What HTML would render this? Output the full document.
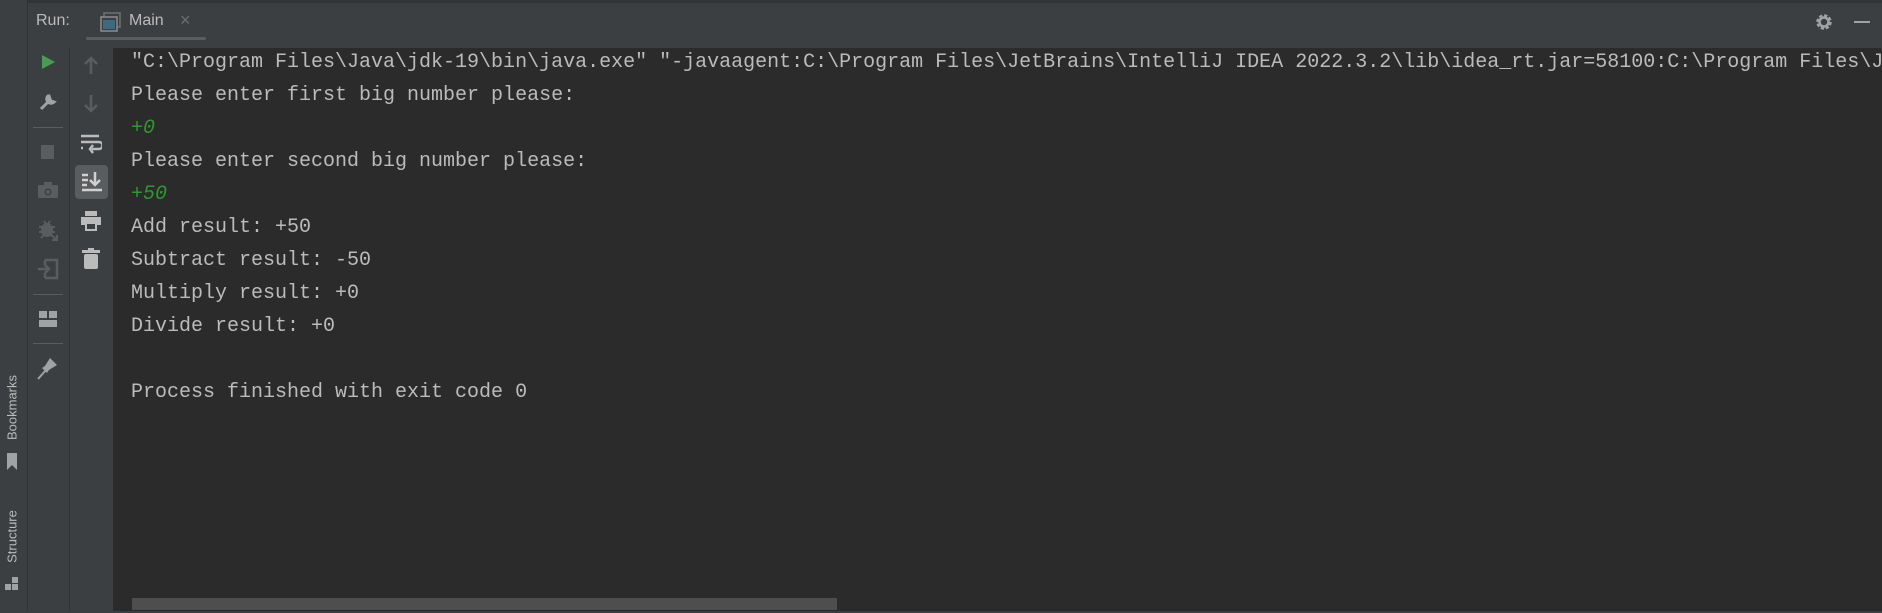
<!DOCTYPE html>
<html><head><style>
body{margin:0;width:1882px;height:613px;background:#2b2b2b;position:relative;overflow:hidden;font-family:"Liberation Sans",sans-serif}
.a{position:absolute}
.mono{font-family:"Liberation Mono",monospace;font-size:20px;color:#bbbbbb;white-space:pre;line-height:33px}
.g{color:#2d9a2d;font-style:italic}
.ic{position:absolute}
</style></head><body>
<div class="a" style="left:0;top:0;width:1882px;height:3px;background:#313335"></div>
<div class="a" style="left:0;top:3px;width:1882px;height:45px;background:#3c3f41"></div>
<div class="a" style="left:0;top:0;width:27px;height:613px;background:#3c3f41;border-right:1px solid #323232"></div>
<div class="a" style="left:28px;top:48px;width:41px;height:565px;background:#3c3f41;border-right:1px solid #323232"></div>
<div class="a" style="left:70px;top:48px;width:43px;height:565px;background:#3c3f41"></div>
<div class="a" style="left:36px;top:12px;font-size:16px;color:#bbbbbb">Run:</div>
<svg class="ic" style="left:100px;top:12px" width="22" height="22"><rect x="4" y="1" width="16" height="14" fill="none" stroke="#6e7274" stroke-width="1.5"/><rect x="1" y="5" width="16" height="14" fill="#3c3f41" stroke="#8a8e90" stroke-width="1.5"/><rect x="3" y="8" width="12" height="9" fill="#3d6a80"/></svg>
<div class="a" style="left:129px;top:12px;font-size:16px;color:#bbbbbb">Main</div>
<div class="a" style="left:180px;top:10px;font-size:18px;color:#6e6e6e">×</div>
<div class="a" style="left:86px;top:37px;width:120px;height:3px;background:#5a5d60;border-radius:2px"></div>
<svg class="ic" style="left:1814px;top:12px" width="20" height="20" viewBox="0 0 20 20"><circle cx="10" cy="10" r="6" fill="none" stroke="#a0a3a5" stroke-width="3.5" stroke-dasharray="3 1.7"/><circle cx="10" cy="10" r="4.5" fill="none" stroke="#a0a3a5" stroke-width="2.5"/></svg>
<div class="a" style="left:1854px;top:21px;width:16px;height:2px;background:#a0a3a5"></div>

<svg class="ic" style="left:40px;top:54px" width="16" height="16"><path d="M2 1 L15 8 L2 15Z" fill="#499c54"/></svg>
<svg class="ic" style="left:38px;top:92px" width="20" height="20"><path d="M3 17 L11 9 M10 4 a4 4 0 1 0 6 6 l-3-1 -1-2 -1-3z" stroke="#a0a3a5" stroke-width="3" fill="#a0a3a5"/></svg>
<div class="a" style="left:33px;top:127px;width:30px;height:1px;background:#5a5d60"></div>
<div class="a" style="left:41px;top:145px;width:13px;height:14px;background:#5a5d60"></div>
<svg class="ic" style="left:37px;top:181px" width="22" height="18"><rect x="1" y="4" width="20" height="13" rx="1" fill="#5a5d60"/><rect x="7" y="1" width="8" height="4" fill="#5a5d60"/><circle cx="11" cy="11" r="3.5" fill="#3c3f41"/><circle cx="11" cy="11" r="2" fill="#5a5d60"/></svg>
<svg class="ic" style="left:37px;top:219px" width="22" height="22"><ellipse cx="10" cy="11" rx="6" ry="7" fill="#5a5d60"/><path d="M2 8h16M2 13h16M4 19l3-3M7 2l2 3M13 2l-2 3" stroke="#5a5d60" stroke-width="2"/><path d="M13 15l7 6M20 16v5h-5" stroke="#5a5d60" stroke-width="2" fill="none"/></svg>
<svg class="ic" style="left:37px;top:258px" width="22" height="22"><path d="M8 2h12v18H8M8 7V2M8 15v5" stroke="#5a5d60" stroke-width="2.5" fill="none"/><path d="M1 11h11M8 7l4 4-4 4" stroke="#5a5d60" stroke-width="2.5" fill="none"/></svg>
<div class="a" style="left:33px;top:294px;width:30px;height:1px;background:#5a5d60"></div>
<svg class="ic" style="left:39px;top:311px" width="18" height="16"><rect x="0" y="0" width="8" height="7" fill="#a0a3a5"/><rect x="10" y="0" width="8" height="7" fill="#a0a3a5"/><rect x="0" y="9" width="18" height="7" fill="#a0a3a5"/></svg>
<div class="a" style="left:33px;top:343px;width:30px;height:1px;background:#5a5d60"></div>
<svg class="ic" style="left:37px;top:356px" width="22" height="24"><path d="M1 23 L9 14" stroke="#a0a3a5" stroke-width="2"/><path d="M8 10 L13 2 L20 9 L12 14 L10 17 L5 12Z" fill="#a0a3a5"/></svg>

<svg class="ic" style="left:83px;top:55px" width="16" height="20"><path d="M8 19V3M2 9l6-6 6 6" stroke="#5a5d60" stroke-width="2.5" fill="none"/></svg>
<svg class="ic" style="left:83px;top:94px" width="16" height="20"><path d="M8 1v16M2 11l6 6 6-6" stroke="#5a5d60" stroke-width="2.5" fill="none"/></svg>
<svg class="ic" style="left:80px;top:134px" width="22" height="22"><path d="M1 2h18M1 8h18a3 3 0 0 1 0 7h-7M1 14h2" stroke="#bbbbbb" stroke-width="2.5" fill="none"/><path d="M13 11l-3 4 3 4" stroke="#bbbbbb" stroke-width="2.5" fill="none"/></svg>
<div class="a" style="left:75px;top:165px;width:33px;height:34px;background:#5a5d60;border-radius:4px"></div>
<svg class="ic" style="left:80px;top:170px" width="24" height="24"><path d="M2 5h6M2 10h6M2 15h5M15 2v12M10 10l5 5 5-5M2 20h20" stroke="#d0d0d0" stroke-width="2.5" fill="none"/></svg>
<svg class="ic" style="left:80px;top:210px" width="22" height="22"><rect x="5" y="1" width="12" height="5" fill="#bbbbbb"/><rect x="1" y="7" width="20" height="8" fill="#bbbbbb"/><rect x="6" y="13" width="10" height="7" fill="#3c3f41" stroke="#bbbbbb" stroke-width="2"/></svg>
<svg class="ic" style="left:82px;top:248px" width="18" height="22"><rect x="0" y="2" width="18" height="3" fill="#bbbbbb"/><rect x="6" y="0" width="6" height="3" fill="#bbbbbb"/><rect x="2" y="6" width="14" height="15" rx="2" fill="#bbbbbb"/></svg>

<div class="a" style="left:2px;top:408px;width:20px;height:0"><div style="position:absolute;left:-30px;top:-8px;width:80px;text-align:center;font-size:13px;color:#bbbbbb;transform:rotate(-90deg)">Bookmarks</div></div>
<svg class="ic" style="left:6px;top:453px" width="12" height="18"><path d="M1 0h10v17l-5-5-5 5z" fill="#a0a3a5"/></svg>
<div class="a" style="left:2px;top:537px;width:20px;height:0"><div style="position:absolute;left:-30px;top:-8px;width:80px;text-align:center;font-size:13px;color:#bbbbbb;transform:rotate(-90deg)">Structure</div></div>
<svg class="ic" style="left:5px;top:577px" width="14" height="14"><rect x="0" y="7" width="6" height="6" fill="#a0a3a5"/><rect x="7" y="7" width="6" height="6" fill="#a0a3a5"/><rect x="7" y="0" width="6" height="6" fill="#a0a3a5"/></svg>

<div class="a mono" style="left:131px;top:46px;width:1751px;height:420px;overflow:hidden">"C:\Program Files\Java\jdk-19\bin\java.exe" "-javaagent:C:\Program Files\JetBrains\IntelliJ IDEA 2022.3.2\lib\idea_rt.jar=58100:C:\Program Files\JetBrains
Please enter first big number please:
<span class="g">+0</span>
Please enter second big number please:
<span class="g">+50</span>
Add result: +50
Subtract result: -50
Multiply result: +0
Divide result: +0

Process finished with exit code 0</div>
<div class="a" style="left:132px;top:598px;width:705px;height:12px;background:#4e4e4e"></div>
<div class="a" style="left:0;top:611px;width:1882px;height:2px;background:#3c3f41"></div>
</body></html>
